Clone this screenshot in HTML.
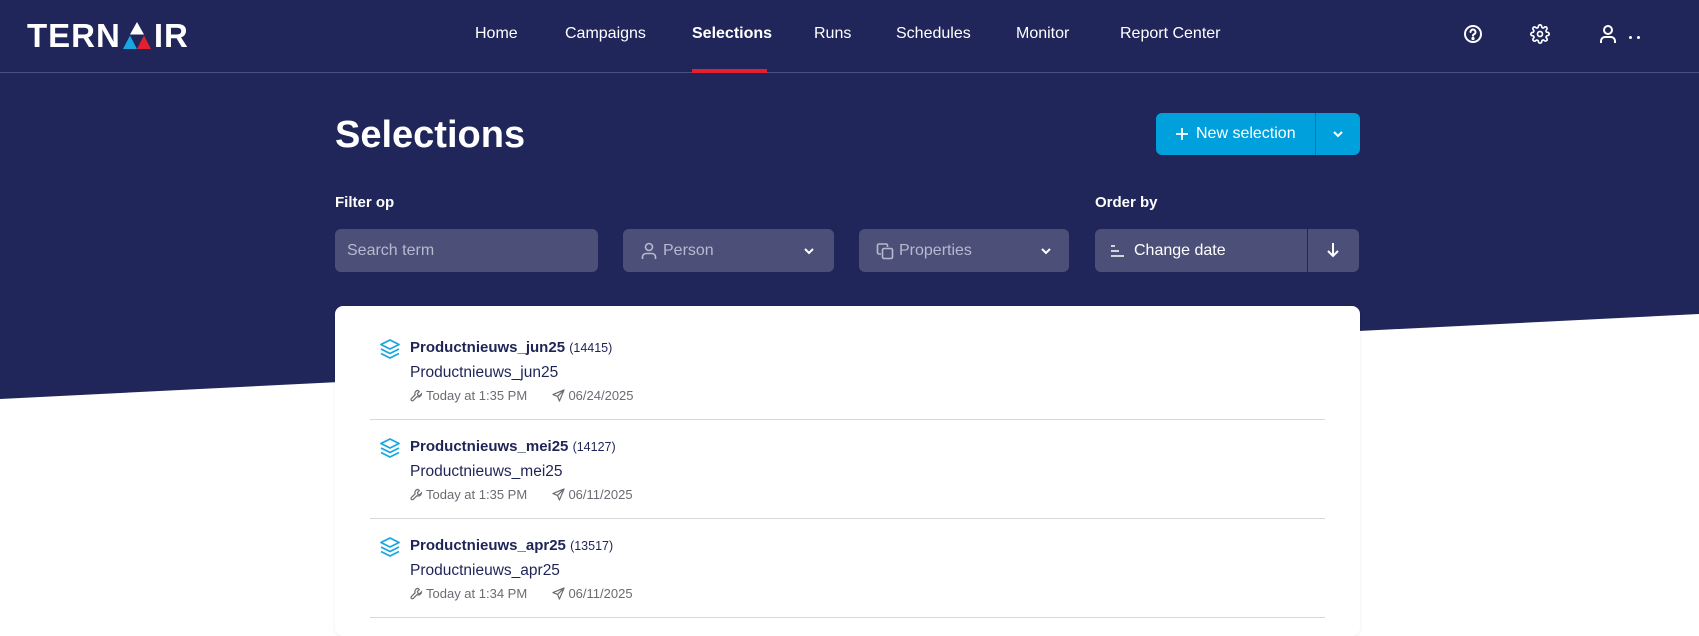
<!DOCTYPE html>
<html><head><meta charset="utf-8"><style>
*{box-sizing:border-box;margin:0;padding:0}
body{width:1699px;height:623px;overflow:hidden;background:#fff;font-family:"Liberation Sans",sans-serif;position:relative}
.bg{position:absolute;left:0;top:0;width:1699px;height:623px}
.nav{position:absolute;left:0;top:0;width:1699px;height:73px;border-bottom:1px solid #4a5080}
.nav a{position:absolute;top:25px;color:#fff;font-size:16px;text-decoration:none}
.ab{position:absolute}
.field{position:absolute;top:229px;height:43px;background:#4c5078;border-radius:6px;color:#b6b9cf;font-size:16px;display:flex;align-items:center}
.lbl{position:absolute;top:194px;color:#fff;font-weight:bold;font-size:15px}
.card{position:absolute;left:335px;top:306px;width:1025px;height:330px;background:#fff;border-radius:8px;box-shadow:0 1px 3px rgba(0,0,0,.08)}
.item{position:absolute;left:35px;width:955px;height:114px;border-bottom:1px solid #d8d8dc}
.t{position:absolute;left:40px;top:33px;font-size:15px;color:#1f2457;font-weight:bold}
.t span{font-weight:normal;font-size:12.5px}
.s{position:absolute;left:40px;top:58px;font-size:15.5px;color:#1f2457}
.m{position:absolute;left:40px;top:82px;font-size:13px;color:#6b6b73;white-space:nowrap}
.m svg{vertical-align:-2px;margin-right:3px}
.logo{position:absolute;left:27px;top:21px;display:flex;align-items:flex-end;color:#fff;font-weight:900;font-size:33px;letter-spacing:1px;line-height:30px}
</style></head><body>
<svg class="bg" viewBox="0 0 1699 623"><polygon points="0,0 1699,0 1699,314 0,399" fill="#20265a"/></svg>
<div class="nav">
<div class="logo"><span>TERN</span><svg width="32" height="27" viewBox="0 0 32 27" style="margin:0 1px 2px 0"><polygon points="16,0 23,12.5 9,12.5" fill="#fff"/><polygon points="9,13.5 16,27 2,27" fill="#1aa6e0"/><polygon points="23,13.5 30,27 16,27" fill="#e5202e"/></svg><span>IR</span></div>
<a style="left:475px">Home</a>
<a style="left:565px">Campaigns</a>
<a style="left:692px;font-weight:bold">Selections</a>
<div class="ab" style="left:692px;top:69px;width:75px;height:4px;background:#e5202e"></div>
<a style="left:814px">Runs</a>
<a style="left:896px">Schedules</a>
<a style="left:1016px">Monitor</a>
<a style="left:1120px">Report Center</a>
<svg class="ab" style="left:1463px;top:24px" width="20" height="20" viewBox="0 0 20 20" fill="none" stroke="#fff" stroke-width="2"><circle cx="10" cy="10" r="8"/><path d="M7.5 8a2.5 2.5 0 1 1 3.5 2.3c-.7.3-1 .8-1 1.5" stroke-linecap="round"/><circle cx="10" cy="14.5" r=".6" fill="#fff"/></svg>
<svg class="ab" style="left:1530px;top:24px" width="20" height="20" viewBox="0 0 24 24" fill="none" stroke="#fff" stroke-width="2"><circle cx="12" cy="12" r="3"/><path d="M19.4 15a1.7 1.7 0 0 0 .3 1.8l.1.1a2 2 0 1 1-2.8 2.8l-.1-.1a1.7 1.7 0 0 0-1.8-.3 1.7 1.7 0 0 0-1 1.5V21a2 2 0 1 1-4 0v-.1a1.7 1.7 0 0 0-1.1-1.5 1.7 1.7 0 0 0-1.8.3l-.1.1a2 2 0 1 1-2.8-2.8l.1-.1a1.7 1.7 0 0 0 .3-1.8 1.7 1.7 0 0 0-1.5-1H3a2 2 0 1 1 0-4h.1a1.7 1.7 0 0 0 1.5-1.1 1.7 1.7 0 0 0-.3-1.8l-.1-.1a2 2 0 1 1 2.8-2.8l.1.1a1.7 1.7 0 0 0 1.8.3H9a1.7 1.7 0 0 0 1-1.5V3a2 2 0 1 1 4 0v.1a1.7 1.7 0 0 0 1 1.5 1.7 1.7 0 0 0 1.8-.3l.1-.1a2 2 0 1 1 2.8 2.8l-.1.1a1.7 1.7 0 0 0-.3 1.8V9a1.7 1.7 0 0 0 1.5 1H21a2 2 0 1 1 0 4h-.1a1.7 1.7 0 0 0-1.5 1z"/></svg>
<svg class="ab" style="left:1599px;top:24px" width="18" height="20" viewBox="0 0 18 20" fill="none" stroke="#fff" stroke-width="2"><circle cx="9" cy="6" r="4"/><path d="M2 19v-2a4 4 0 0 1 4-4h6a4 4 0 0 1 4 4v2"/></svg>
<div class="ab" style="left:1629px;top:36px;width:3px;height:3px;background:#fff;border-radius:50%"></div>
<div class="ab" style="left:1637px;top:36px;width:3px;height:3px;background:#fff;border-radius:50%"></div>
</div>
<div class="ab" style="left:335px;top:114px;color:#fff;font-weight:bold;font-size:38px">Selections</div>
<div class="ab" style="left:1156px;top:113px;width:204px;height:42px;background:#00a0dc;border-radius:6px;color:#fff;font-size:16px">
<svg class="ab" style="left:20px;top:15px" width="12" height="12" viewBox="0 0 12 12" stroke="#fff" stroke-width="1.8"><path d="M6 0v12M0 6h12"/></svg>
<div class="ab" style="left:40px;top:12px">New selection</div>
<div class="ab" style="left:159px;top:0;width:1px;height:42px;background:#1c6f9e"></div>
<svg class="ab" style="left:176px;top:16px" width="12" height="10" viewBox="0 0 12 10" fill="none" stroke="#fff" stroke-width="2"><path d="M2 3l4 4 4-4"/></svg>
</div>
<div class="lbl" style="left:335px">Filter op</div>
<div class="lbl" style="left:1095px">Order by</div>
<div class="field" style="left:335px;width:263px;padding-left:12px">Search term</div>
<div class="field" style="left:623px;width:211px;padding-left:40px">Person
<svg class="ab" style="left:18px;top:13px" width="16" height="18" viewBox="0 0 16 18" fill="none" stroke="#b6b9cf" stroke-width="1.6"><circle cx="8" cy="5" r="3.5"/><path d="M1.5 17v-2a3.5 3.5 0 0 1 3.5-3.5h6a3.5 3.5 0 0 1 3.5 3.5v2"/></svg>
<svg class="ab" style="left:180px;top:17px" width="12" height="10" viewBox="0 0 12 10" fill="none" stroke="#fff" stroke-width="2"><path d="M2 3l4 4 4-4"/></svg></div>
<div class="field" style="left:859px;width:210px;padding-left:40px">Properties
<svg class="ab" style="left:17px;top:13px" width="18" height="18" viewBox="0 0 18 18" fill="none" stroke="#b6b9cf" stroke-width="1.6"><path d="M5 12H3a1.5 1.5 0 0 1-1.5-1.5v-7A1.5 1.5 0 0 1 3 2h7a1.5 1.5 0 0 1 1.5 1.5V5"/><rect x="6.5" y="6.5" width="10" height="10" rx="1.5"/></svg>
<svg class="ab" style="left:181px;top:17px" width="12" height="10" viewBox="0 0 12 10" fill="none" stroke="#fff" stroke-width="2"><path d="M2 3l4 4 4-4"/></svg></div>
<div class="field" style="left:1095px;width:264px;padding-left:39px;color:#fff">Change date
<svg class="ab" style="left:15px;top:15px" width="16" height="13" viewBox="0 0 16 13" stroke="#fff" stroke-width="1.6"><path d="M1 2h4M1 7h8M1 12h13"/></svg>
<div class="ab" style="left:212px;top:0;width:1px;height:43px;background:#20265a"></div>
<svg class="ab" style="left:231px;top:13px" width="14" height="16" viewBox="0 0 14 16" fill="none" stroke="#fff" stroke-width="2"><path d="M7 1v13M2 9l5 5 5-5"/></svg></div>
<div class="card">
<div class="item" style="top:0">
<svg class="ab" style="left:9px;top:32px" width="22" height="22" viewBox="0 0 22 22" fill="none" stroke="#1aa6e0" stroke-width="1.8" stroke-linejoin="round"><path d="M11 2l9 4.5-9 4.5-9-4.5z"/><path d="M2 11l9 4.5 9-4.5"/><path d="M2 15.5l9 4.5 9-4.5"/></svg>
<div class="t">Productnieuws_jun25 <span>(14415)</span></div><div class="s">Productnieuws_jun25</div>
<div class="m"><svg width="13" height="13" viewBox="0 0 14 14" fill="none" stroke="#6b6b73" stroke-width="1.3"><path d="M8.5 1.5a3.5 3.5 0 0 0-3 4.8L1.5 10.3a1.4 1.4 0 0 0 2 2l4-4a3.5 3.5 0 0 0 4.8-3l-2 2-1.8-.6-.5-1.8 2-2z"/></svg>Today at 1:35 PM &nbsp;&nbsp;&nbsp;&nbsp;&nbsp; <svg width="13" height="13" viewBox="0 0 14 14" fill="none" stroke="#6b6b73" stroke-width="1.3" stroke-linejoin="round"><path d="M13 1L1 6l5 2 2 5z M13 1L6 8"/></svg>06/24/2025</div></div>
<div class="item" style="top:99px">
<svg class="ab" style="left:9px;top:32px" width="22" height="22" viewBox="0 0 22 22" fill="none" stroke="#1aa6e0" stroke-width="1.8" stroke-linejoin="round"><path d="M11 2l9 4.5-9 4.5-9-4.5z"/><path d="M2 11l9 4.5 9-4.5"/><path d="M2 15.5l9 4.5 9-4.5"/></svg>
<div class="t">Productnieuws_mei25 <span>(14127)</span></div><div class="s">Productnieuws_mei25</div>
<div class="m"><svg width="13" height="13" viewBox="0 0 14 14" fill="none" stroke="#6b6b73" stroke-width="1.3"><path d="M8.5 1.5a3.5 3.5 0 0 0-3 4.8L1.5 10.3a1.4 1.4 0 0 0 2 2l4-4a3.5 3.5 0 0 0 4.8-3l-2 2-1.8-.6-.5-1.8 2-2z"/></svg>Today at 1:35 PM &nbsp;&nbsp;&nbsp;&nbsp;&nbsp; <svg width="13" height="13" viewBox="0 0 14 14" fill="none" stroke="#6b6b73" stroke-width="1.3" stroke-linejoin="round"><path d="M13 1L1 6l5 2 2 5z M13 1L6 8"/></svg>06/11/2025</div></div>
<div class="item" style="top:198px">
<svg class="ab" style="left:9px;top:32px" width="22" height="22" viewBox="0 0 22 22" fill="none" stroke="#1aa6e0" stroke-width="1.8" stroke-linejoin="round"><path d="M11 2l9 4.5-9 4.5-9-4.5z"/><path d="M2 11l9 4.5 9-4.5"/><path d="M2 15.5l9 4.5 9-4.5"/></svg>
<div class="t">Productnieuws_apr25 <span>(13517)</span></div><div class="s">Productnieuws_apr25</div>
<div class="m"><svg width="13" height="13" viewBox="0 0 14 14" fill="none" stroke="#6b6b73" stroke-width="1.3"><path d="M8.5 1.5a3.5 3.5 0 0 0-3 4.8L1.5 10.3a1.4 1.4 0 0 0 2 2l4-4a3.5 3.5 0 0 0 4.8-3l-2 2-1.8-.6-.5-1.8 2-2z"/></svg>Today at 1:34 PM &nbsp;&nbsp;&nbsp;&nbsp;&nbsp; <svg width="13" height="13" viewBox="0 0 14 14" fill="none" stroke="#6b6b73" stroke-width="1.3" stroke-linejoin="round"><path d="M13 1L1 6l5 2 2 5z M13 1L6 8"/></svg>06/11/2025</div></div>
</div>
</body></html>
